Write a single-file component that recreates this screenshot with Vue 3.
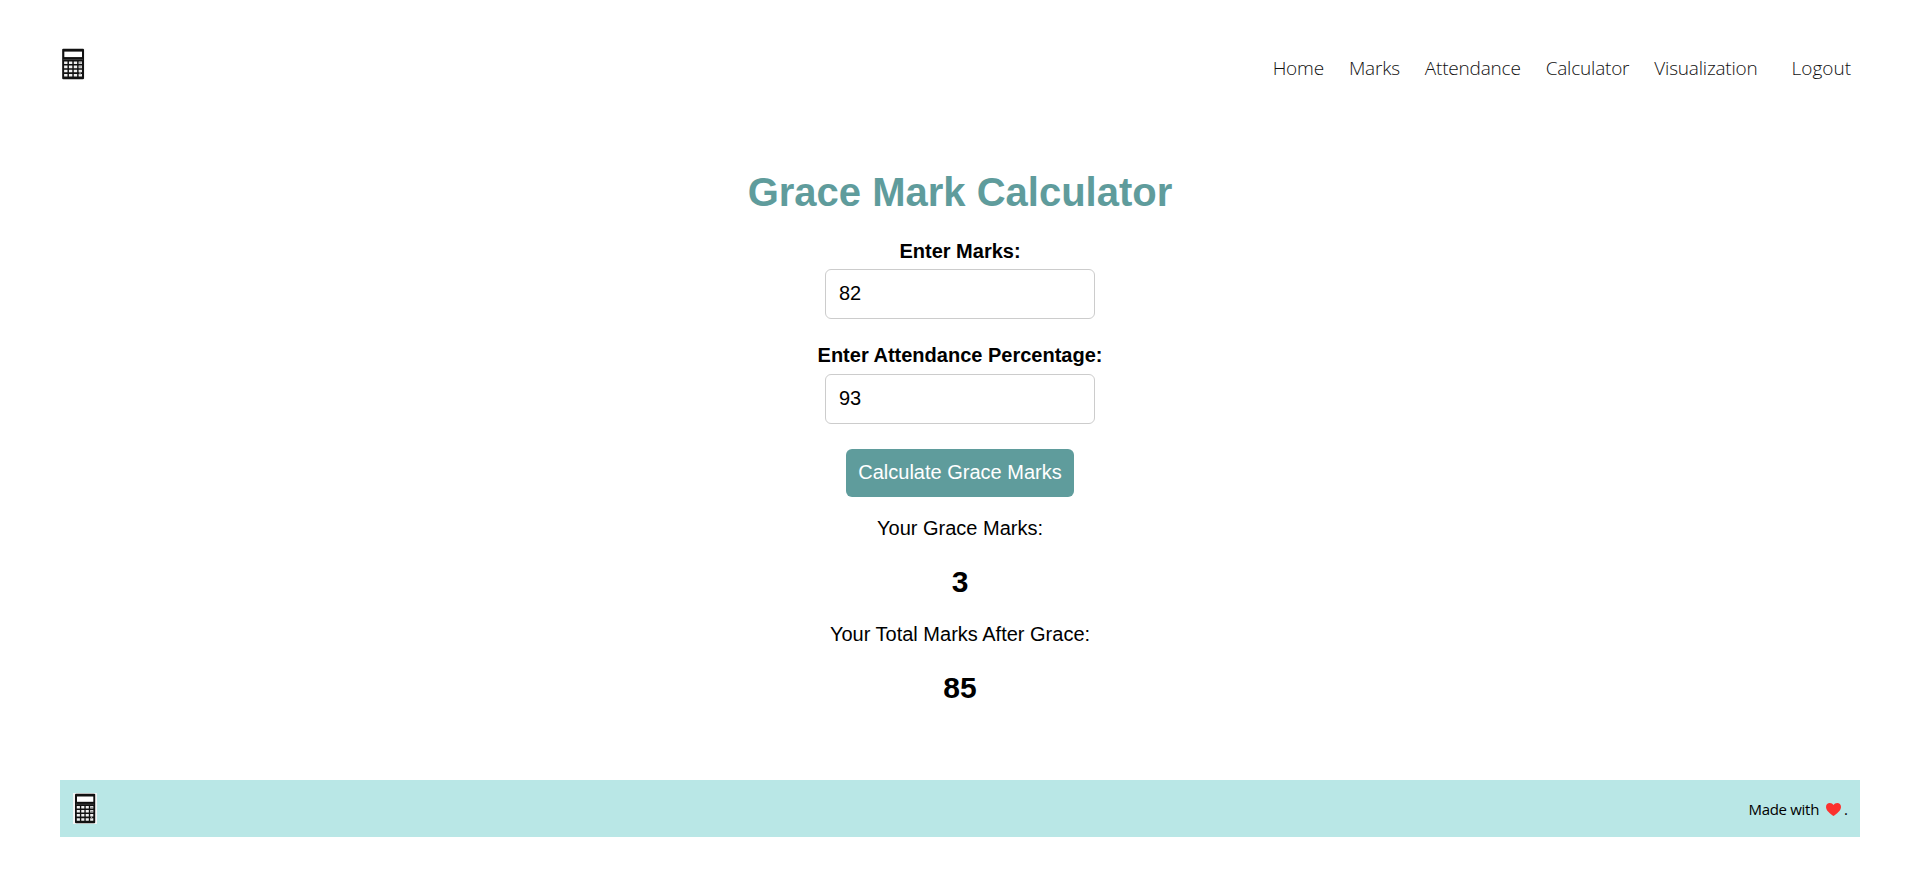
<script setup>
import { ref } from 'vue'

const links = ['Home', 'Marks', 'Attendance', 'Calculator', 'Visualization']
const marks = ref('82')
const attendance = ref('93')
const grace = ref(3)
const total = ref(85)
</script>

<template>
  <div class="page">
    <header class="header">
      <svg class="logo" viewBox="0 0 24 31" preserveAspectRatio="none" aria-hidden="true">
        <rect width="24" height="31" fill="#fdfdfd" />
        <rect x="2" y=".7" width="20.200" height="29.600" rx="1" fill="#111" />
        <rect x="4" y="3.500" width="16.300" height="5.300" fill="#fff" />
        <path d="M3 11.200h18" stroke="#555" stroke-width=".6" />
        <path d="M3.800 14.300h16.500M3.800 18.300h16.500M3.800 22.300h16.500M3.800 26.400h16.500" stroke="#f0f0f0" stroke-width="2.500" stroke-dasharray="3.100 1.360" />
        <path d="M17.500 14.300h2.400M17.500 18.300h2.400M18.500 23v3" stroke="#999" stroke-width="1.200" />
      </svg>
      <nav class="nav">
        <a v-for="link in links" :key="link" class="link">{{ link }}</a>
        <a class="link logout">Logout</a>
      </nav>
    </header>

    <main class="calculator">
      <h1 class="title">Grace Mark Calculator</h1>
      <label class="label" for="marks">Enter Marks:</label>
      <input id="marks" v-model="marks" class="input" />
      <label class="label attendance-label" for="attendance">Enter Attendance Percentage:</label>
      <input id="attendance" v-model="attendance" class="input" />
      <button class="button">Calculate Grace Marks</button>
      <p class="caption">Your Grace Marks:</p>
      <strong class="result">{{ grace }}</strong>
      <p class="caption">Your Total Marks After Grace:</p>
      <strong class="result">{{ total }}</strong>
    </main>

    <footer class="footer">
      <svg class="logo" viewBox="0 0 24 31" preserveAspectRatio="none" aria-hidden="true">
        <rect width="24" height="31" fill="#f3f5f5" />
        <rect x="2" y=".7" width="20.200" height="29.600" rx="1" fill="#111" />
        <rect x="4" y="3.500" width="16.300" height="5.300" fill="#fff" />
        <path d="M3 11.200h18" stroke="#555" stroke-width=".6" />
        <path d="M3.800 14.300h16.500M3.800 18.300h16.500M3.800 22.300h16.500M3.800 26.400h16.500" stroke="#f0f0f0" stroke-width="2.500" stroke-dasharray="3.100 1.360" />
        <path d="M17.500 14.300h2.400M17.500 18.300h2.400M18.500 23v3" stroke="#999" stroke-width="1.200" />
      </svg>
      <div class="credit">
        <span class="made">Made with</span>
        <svg class="heart" viewBox="0 0 15 13" aria-hidden="true">
          <path d="M7.5 13C4.5 10.7 0 7.6 0 3.9 0 1.5 1.7 0 3.8 0c1.600 0 2.900.8 3.700 2.100C8.300.8 9.600 0 11.200 0 13.300 0 15 1.500 15 3.900c0 3.700-4.500 6.800-7.500 9.100Z" fill="#fc312e" />
        </svg>
        <span class="dot">.</span>
      </div>
    </footer>
  </div>
</template>

<style>
body {
  background: #fff;
}
</style>

<style scoped>
.page {
  box-sizing: border-box;
  height: 875px;
  padding: 0 60px;
  display: flex;
  flex-direction: column;
  color: #000;
  font-family: "Liberation Sans", Arial, sans-serif;
}
.header {
  height: 136px;
  display: flex;
  justify-content: space-between;
  align-items: flex-start;
}
.logo {
  width: 24px;
  height: 31px;
  flex: none;
}
.header .logo {
  width: 26px;
  height: 32px;
  margin-top: 48px;
}
.nav {
  display: flex;
  gap: 25px;
  margin-top: 54px;
  padding-right: 9px;
}
.link {
  font-family: "Open Sans", sans-serif;
  font-size: 19px;
  font-weight: 300;
  line-height: 28px;
  letter-spacing: -0.2px;
  color: #111;
}
.logout {
  margin-left: 9px;
  letter-spacing: 0;
}
.calculator {
  height: 644px;
  display: flex;
  flex-direction: column;
  align-items: center;
}
.title {
  margin: 33px 0 23px;
  font-size: 40px;
  line-height: 46px;
  color: #5f9c9c;
}
.label {
  height: 31px;
  font-size: 20px;
  line-height: 26px;
  font-weight: 700;
}
.attendance-label {
  line-height: 24px;
}
.input {
  box-sizing: border-box;
  width: 270px;
  height: 50px;
  margin: 0 0 24px;
  padding: 0 12px 1px 13px;
  border: 1px solid #ccc;
  border-radius: 6px;
  font: 20px "Liberation Sans", Arial, sans-serif;
  color: #000;
  outline: none;
}
.button {
  width: 228px;
  height: 48px;
  margin: 1px 0 19px;
  padding: 0 0 2px;
  border: 0;
  border-radius: 6px;
  background: #5f9c9c;
  color: #fff;
  font: 20px "Liberation Sans", Arial, sans-serif;
  white-space: nowrap;
}
.caption {
  margin: 0;
  font-size: 20px;
  line-height: 24px;
}
.result {
  margin: 24px 0 23px;
  font-size: 30px;
  line-height: 35px;
}
.footer {
  height: 57px;
  flex: none;
  display: flex;
  justify-content: space-between;
  align-items: center;
  padding: 0 12px 0 13px;
  background: #b9e7e6;
}
.credit {
  display: flex;
  align-items: center;
  font-family: "Open Sans", sans-serif;
  font-size: 15px;
  line-height: 22px;
}
.made {
  letter-spacing: -0.3px;
}
.heart {
  width: 15px;
  height: 13px;
  margin: 2px 3px 0 7px;
}
</style>
